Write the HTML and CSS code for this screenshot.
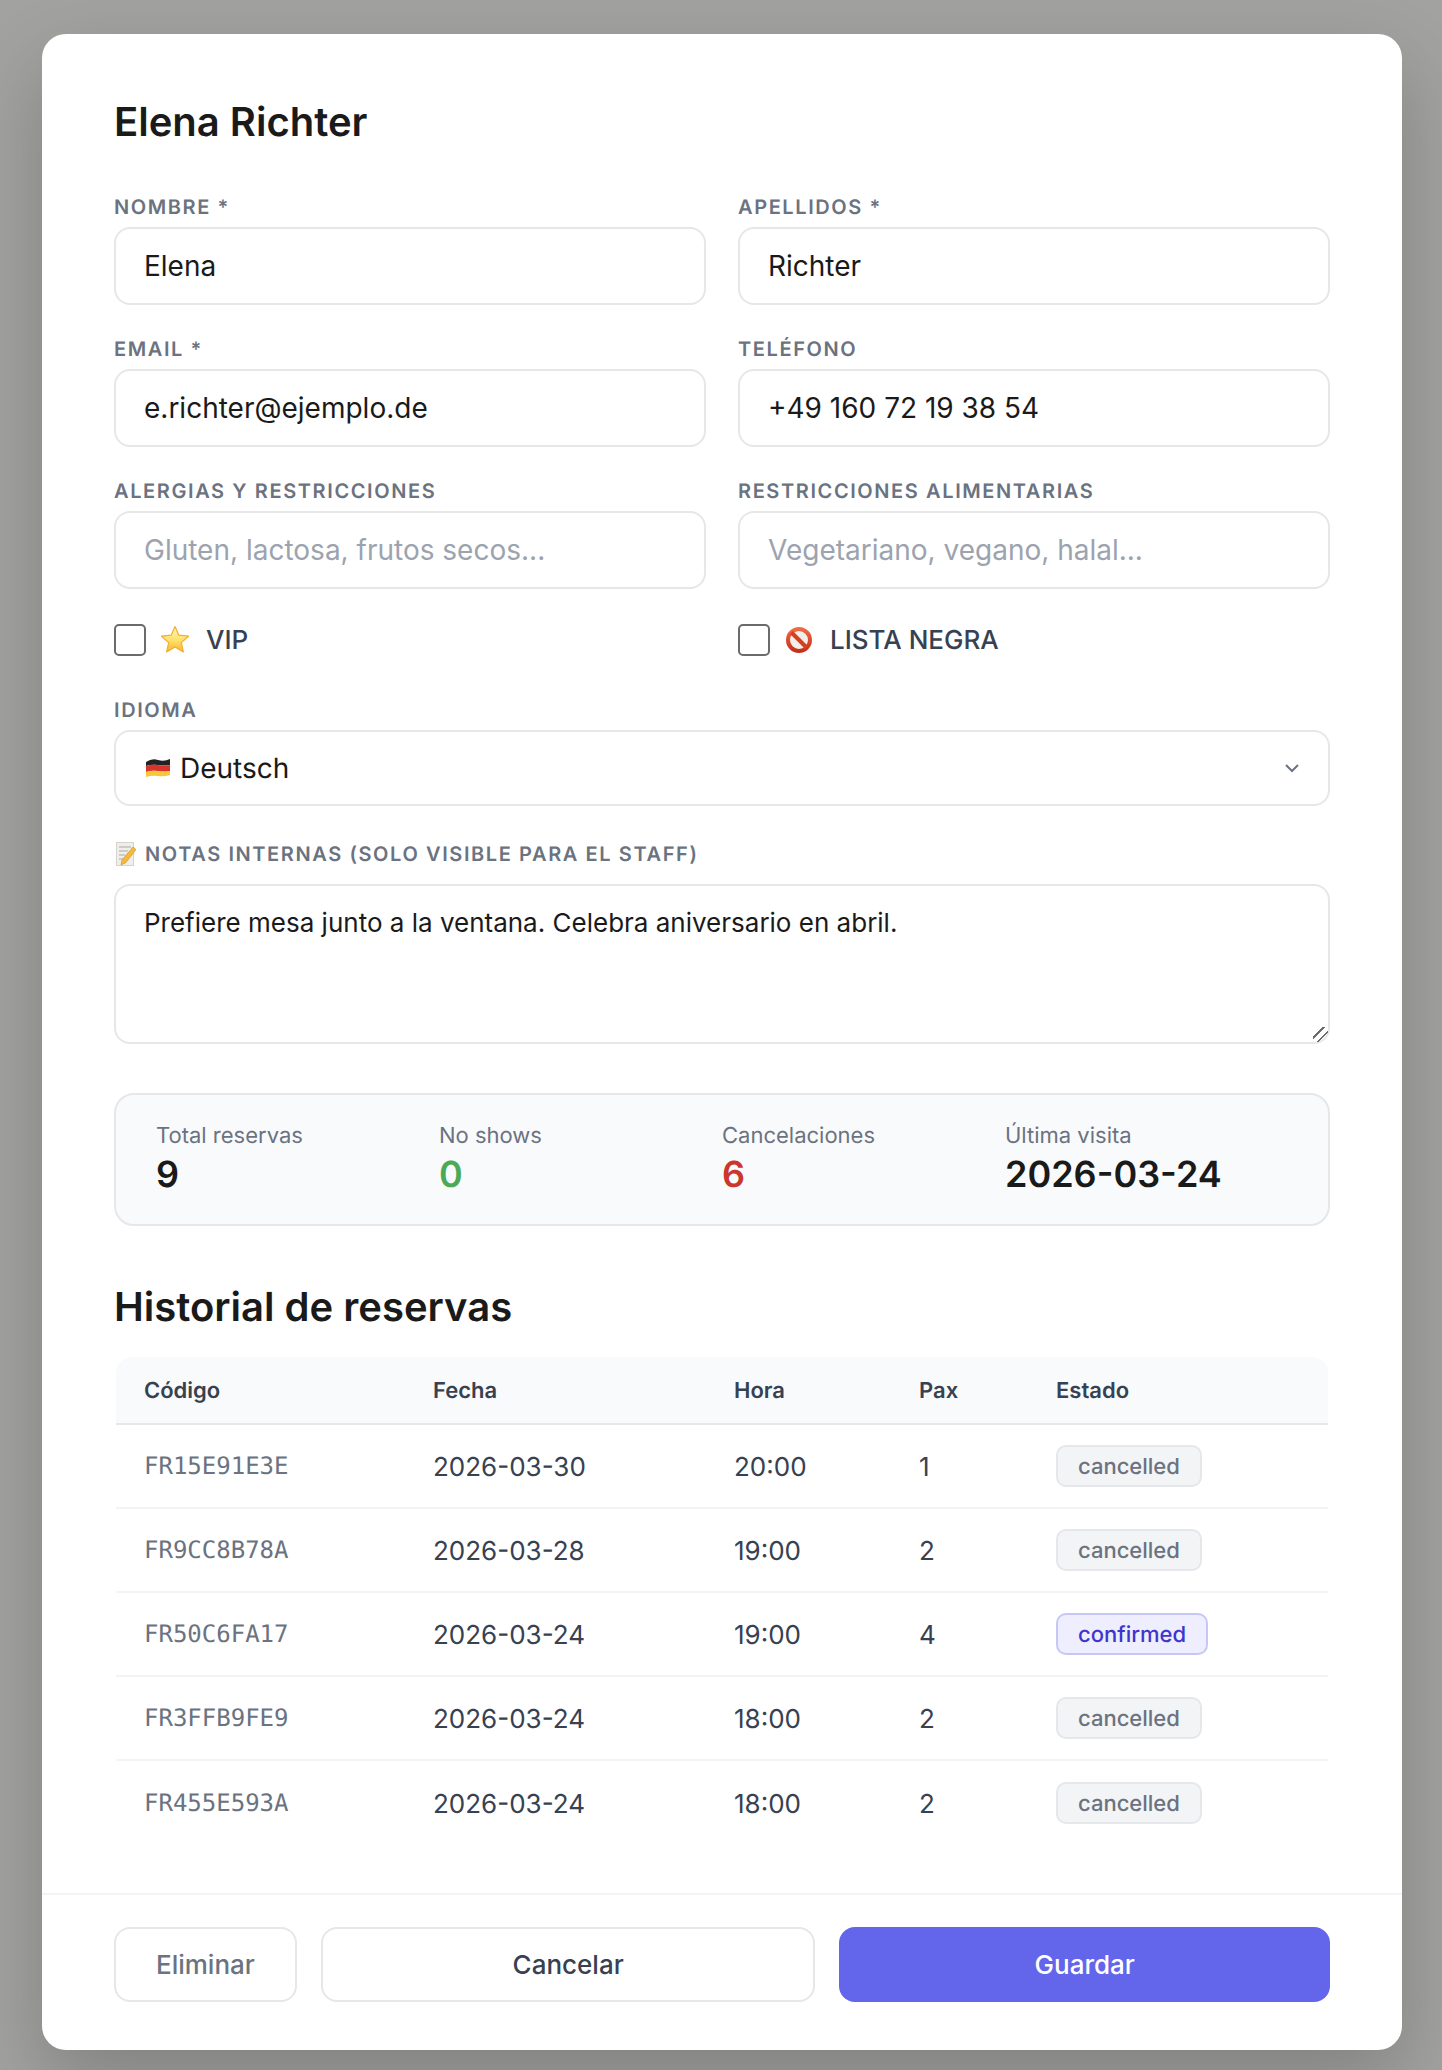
FILE: index.html
```html
<!DOCTYPE html>
<html lang="es">

<head>
    <meta charset="UTF-8">
    <title>Elena Richter</title>
    <link rel="stylesheet" href="styles.css">
</head>

<body>
    <div class="modal">
        <div class="modal-body">
            <h2 class="modal-title">Elena Richter</h2>

            <div class="form-grid">
                <div class="field">
                    <label>Nombre *</label>
                    <input type="text" value="Elena">
                </div>
                <div class="field">
                    <label>Apellidos *</label>
                    <input type="text" value="Richter">
                </div>
                <div class="field">
                    <label>Email *</label>
                    <input type="text" value="e.richter@ejemplo.de">
                </div>
                <div class="field">
                    <label>Teléfono</label>
                    <input type="text" value="+49 160 72 19 38 54">
                </div>
                <div class="field">
                    <label>Alergias y restricciones</label>
                    <input type="text" placeholder="Gluten, lactosa, frutos secos...">
                </div>
                <div class="field">
                    <label>Restricciones alimentarias</label>
                    <input type="text" placeholder="Vegetariano, vegano, halal...">
                </div>
            </div>

            <div class="check-row">
                <div class="check">
                    <input type="checkbox">
                    <svg class="emoji" width="30" height="30" viewBox="0 0 30 30">
                        <defs>
                            <linearGradient id="star-fill" x1="0" y1="0" x2="0" y2="1">
                                <stop offset="0" stop-color="#fff6b8" />
                                <stop offset="0.55" stop-color="#ffe06a" />
                                <stop offset="1" stop-color="#f8b62e" />
                            </linearGradient>
                        </defs>
                        <path d="M15 1.500l3.900 8.700 9.600 1-7.200 6.400 2.100 9.300L15 22.100l-8.400 4.800 2.100-9.300-7.200-6.400 9.600-1z" fill="url(#star-fill)" stroke="#f3ad2f" stroke-width="1.200" stroke-linejoin="round" />
                    </svg>
                    <span>VIP</span>
                </div>
                <div class="check">
                    <input type="checkbox">
                    <svg class="emoji" width="30" height="30" viewBox="0 0 30 30">
                        <defs>
                            <linearGradient id="ban-ring" x1="0" y1="0" x2="0" y2="1">
                                <stop offset="0" stop-color="#ee6a45" />
                                <stop offset="1" stop-color="#c5301a" />
                            </linearGradient>
                        </defs>
                        <circle cx="15" cy="15" r="11" fill="#f2eeea" stroke="url(#ban-ring)" stroke-width="4" />
                        <path d="M7.500 7.500l15 15" stroke="#d4401f" stroke-width="4" />
                    </svg>
                    <span>LISTA NEGRA</span>
                </div>
            </div>

            <div class="field idioma">
                <label>Idioma</label>
                <div class="select">
                    <svg class="flag" width="24" height="18" viewBox="0 0 24 18">
                        <path d="M0 3q6-4 12-2t12-1v6q-6 1-12 0t-12 1z" fill="#222" />
                        <path d="M0 7q6-2 12-1t12 0v6q-6 1-12 0t-12 1z" fill="#d8352a" />
                        <path d="M0 13q6-2 12-1t12 0v4q-6 2-12 1t-12 1z" fill="#f5c83c" />
                    </svg>
                    <span>Deutsch</span>
                    <svg class="chevron" width="16" height="10" viewBox="0 0 16 10">
                        <path d="M2 2l6 6 6-6" fill="none" stroke="#6b7280" stroke-width="2" />
                    </svg>
                </div>
            </div>

            <div class="field notes">
                <label>
                    <svg class="memo" width="20" height="24" viewBox="0 0 20 24">
                        <rect x="0.500" y="0.500" width="17" height="23" fill="#efeee9" stroke="#d5d3cc" />
                        <path d="M3 5h12M3 9h9M3 13h6M3 17h5" stroke="#a9a9a9" stroke-width="1" />
                        <path d="M17 5l3 2.500-10 13-5 2.500 1-5z" fill="#f5b93c" stroke="#c98a20" stroke-width="0.600" />
                    </svg>
                    Notas internas (solo visible para el staff)
                </label>
                <textarea>Prefiere mesa junto a la ventana. Celebra aniversario en abril.</textarea>
            </div>

            <div class="stats">
                <div class="stat">
                    <div class="stat-label">Total reservas</div>
                    <div class="stat-value">9</div>
                </div>
                <div class="stat">
                    <div class="stat-label">No shows</div>
                    <div class="stat-value green">0</div>
                </div>
                <div class="stat">
                    <div class="stat-label">Cancelaciones</div>
                    <div class="stat-value red">6</div>
                </div>
                <div class="stat">
                    <div class="stat-label">Última visita</div>
                    <div class="stat-value">2026-03-24</div>
                </div>
            </div>

            <h3 class="section-title">Historial de reservas</h3>

            <table class="history">
                <thead>
                    <tr>
                        <th class="col-code">Código</th>
                        <th class="col-date">Fecha</th>
                        <th class="col-time">Hora</th>
                        <th class="col-pax">Pax</th>
                        <th>Estado</th>
                    </tr>
                </thead>
                <tbody>
                    <tr>
                        <td class="code">FR15E91E3E</td>
                        <td>2026-03-30</td>
                        <td>20:00</td>
                        <td>1</td>
                        <td class="state"><span class="badge">cancelled</span></td>
                    </tr>
                    <tr>
                        <td class="code">FR9CC8B78A</td>
                        <td>2026-03-28</td>
                        <td>19:00</td>
                        <td>2</td>
                        <td class="state"><span class="badge">cancelled</span></td>
                    </tr>
                    <tr>
                        <td class="code">FR50C6FA17</td>
                        <td>2026-03-24</td>
                        <td>19:00</td>
                        <td>4</td>
                        <td class="state"><span class="badge confirmed">confirmed</span></td>
                    </tr>
                    <tr>
                        <td class="code">FR3FFB9FE9</td>
                        <td>2026-03-24</td>
                        <td>18:00</td>
                        <td>2</td>
                        <td class="state"><span class="badge">cancelled</span></td>
                    </tr>
                    <tr class="last">
                        <td class="code">FR455E593A</td>
                        <td>2026-03-24</td>
                        <td>18:00</td>
                        <td>2</td>
                        <td class="state"><span class="badge">cancelled</span></td>
                    </tr>
                </tbody>
            </table>
        </div>

        <div class="modal-footer">
            <button class="btn btn-delete">Eliminar</button>
            <button class="btn btn-cancel">Cancelar</button>
            <button class="btn btn-save">Guardar</button>
        </div>
    </div>
</body>

</html>
```

FILE: styles.css
```css
* {
    box-sizing: border-box;
}

body {
    margin: 0;
    padding: 34px 40px 20px 42px;
    background: #a2a2a0;
    font-family: Inter, "Liberation Sans", sans-serif;
    color: #1a1a1a;
    text-rendering: geometricPrecision;
}

.modal {
    width: 1360px;
    height: 2016px;
    background-color: white;
    border-radius: 24px;
    box-shadow: 0 32px 80px rgba(0, 0, 0, 0.2);
    display: flex;
    flex-direction: column;
}

.modal-body {
    flex: 1;
    padding: 64px 72px 0;
}

.modal-title {
    margin: 0 0 48px;
    font-size: 40px;
    line-height: 48px;
    font-weight: 600;
}

.form-grid {
    display: grid;
    grid-template-columns: 1fr 1fr;
    column-gap: 32px;
    row-gap: 31px;
}

.field label {
    display: block;
    margin-bottom: 7px;
    font-size: 20px;
    line-height: 26px;
    font-weight: 600;
    letter-spacing: 1.600px;
    text-transform: uppercase;
    color: #6b7280;
}

.field input,
.field textarea,
.select {
    display: block;
    width: 100%;
    border: 2px solid #e5e7eb;
    border-radius: 16px;
    background-color: white;
    font-family: inherit;
    font-size: 28px;
    color: #1a1a1a;
    outline: none;
}

.field input {
    height: 78px;
    padding: 0 28px;
}

.field input::placeholder {
    color: #9ca3af;
    opacity: 1;
}

.check-row {
    display: grid;
    grid-template-columns: 1fr 1fr;
    column-gap: 32px;
    margin-top: 35px;
}

.check {
    display: flex;
    align-items: center;
    height: 32px;
    font-size: 26px;
    font-weight: 500;
    color: #374151;
}

.check input {
    appearance: none;
    width: 32px;
    height: 32px;
    margin: 0 14px 0 0;
    border: 2.500px solid #6b6b6b;
    border-radius: 5px;
    background-color: white;
}

.check .emoji {
    margin-right: 16px;
}

.idioma {
    margin-top: 41px;
}

.select {
    display: flex;
    align-items: center;
    height: 76px;
    padding: 0 28px 0 30px;
}

.select .flag {
    margin-right: 10px;
}

.select .chevron {
    margin-left: auto;
}

.notes {
    margin-top: 35px;
}

.notes label {
    display: flex;
    align-items: center;
    gap: 9px;
    margin-bottom: 17px;
    padding-left: 2px;
}

.field textarea {
    height: 160px;
    padding: 20px 28px;
    font-size: 26px;
    line-height: 34px;
    resize: vertical;
}

.field textarea::-webkit-resizer {
    background: linear-gradient(135deg, transparent 33%, #6b6b6b 33%, #6b6b6b 42%, transparent 42%, transparent 61%, #6b6b6b 61%, #6b6b6b 70%, transparent 70%);
}

.stats {
    display: grid;
    grid-template-columns: repeat(4, 1fr);
    height: 133px;
    margin-top: 49px;
    padding: 27px 40px 0;
    background-color: #f9fafb;
    border: 2px solid #e5e7eb;
    border-radius: 20px;
}

.stat-label {
    font-size: 22px;
    line-height: 28px;
    color: #6b7280;
}

.stat-value {
    font-size: 36px;
    line-height: 48px;
    font-weight: 600;
    color: #1a1a1a;
}

.stat-value.green {
    color: #4caa57;
}

.stat-value.red {
    color: #c9372e;
}

.section-title {
    margin: 57px 0 26px;
    font-size: 40px;
    line-height: 48px;
    font-weight: 600;
}

.history {
    width: 1212px;
    margin-left: 2px;
    border-collapse: separate;
    border-spacing: 0;
    table-layout: fixed;
}

.history th {
    height: 68px;
    padding: 2px 0 0 28px;
    background-color: #f9fafb;
    border-bottom: 2px solid #e5e7eb;
    text-align: left;
    font-size: 22px;
    font-weight: 600;
    color: #374151;
}

.history th:first-child {
    border-top-left-radius: 16px;
}

.history th:last-child {
    border-top-right-radius: 16px;
}

.col-code {
    width: 289px;
}

.col-date {
    width: 301px;
}

.col-time {
    width: 185px;
}

.col-pax {
    width: 137px;
}

.history td {
    height: 84px;
    padding: 3px 0 0 28px;
    border-bottom: 2px solid #f3f4f6;
    font-size: 26px;
    line-height: 34px;
    color: #374151;
}

.history .last td {
    border-bottom: none;
}

.history td.code {
    padding-top: 0;
    font-family: "DejaVu Sans Mono", monospace;
    font-size: 24px;
    color: #6b7280;
}

.history td.state {
    padding-top: 0;
}

.badge {
    display: inline-block;
    height: 42px;
    padding: 0 20px;
    border: 2px solid #e5e7eb;
    border-radius: 10px;
    background-color: #f3f4f6;
    font-size: 22px;
    line-height: 40px;
    font-weight: 500;
    color: #6b7280;
    vertical-align: middle;
}

.badge.confirmed {
    background-color: #eef;
    border-color: #c7c7f7;
    color: #3f35cc;
}

.modal-footer {
    display: flex;
    gap: 24px;
    padding: 32px 72px 48px;
    border-top: 2px solid #f3f4f6;
}

.btn {
    height: 75px;
    padding: 0 40px;
    border: 2px solid #e5e7eb;
    border-radius: 16px;
    background-color: white;
    font-family: inherit;
    font-size: 26px;
    font-weight: 500;
    color: #374151;
}

.btn-delete {
    flex: none;
    color: #6b7280;
}

.btn-cancel,
.btn-save {
    flex: 1;
}

.btn-save {
    border: none;
    background-color: #6366eb;
    color: white;
}
```
